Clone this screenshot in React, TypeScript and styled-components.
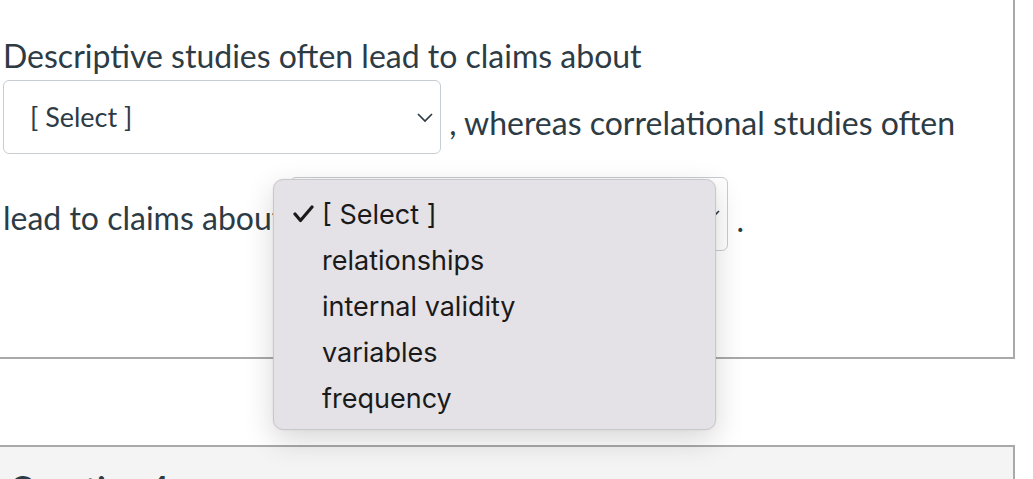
import React from "react";
import styled, { createGlobalStyle } from "styled-components";

const GlobalStyle = createGlobalStyle`
  body {
    margin: 0;
    background: #ffffff;
    font-family: Lato, "Liberation Sans", sans-serif;
    color: #2d3b45;
  }
`;

const Page = styled.div`
  position: relative;
  width: 1033px;
  height: 479px;
  overflow: hidden;
`;

const QuestionPanel = styled.section<{ $muted?: boolean }>`
  box-sizing: border-box;
  width: 1015px;
  border: 2px solid #a9a9a9;
  border-left: none;
  border-top: ${({ $muted }) => ($muted ? "2px solid #a9a9a9" : "none")};
  background: ${({ $muted }) => ($muted ? "#f4f4f4" : "#ffffff")};
  height: ${({ $muted }) => ($muted ? "120px" : "359px")};
  margin-top: ${({ $muted }) => ($muted ? "86px" : "0")};
  padding: ${({ $muted }) => ($muted ? "22px 0 0 10px" : "37px 0 0 3px")};
`;

const Line = styled.div<{ $gap?: number }>`
  display: flex;
  align-items: flex-start;
  font-size: 32px;
  line-height: 38px;
  margin-top: ${({ $gap }) => $gap ?? 0}px;
`;

const Words = styled.span<{ $offset?: number }>`
  margin-top: ${({ $offset }) => $offset ?? 0}px;
  white-space: nowrap;
`;

const SelectBox = styled.div<{ $left?: number }>`
  box-sizing: border-box;
  display: flex;
  align-items: center;
  justify-content: space-between;
  flex: none;
  width: 438px;
  height: 74px;
  margin-left: ${({ $left }) => $left ?? 0}px;
  padding: 0 6px 0 26px;
  border: 1.5px solid #c7cdd1;
  border-radius: 6px;
  background: #ffffff;
  font-size: 27px;
  line-height: 34px;
  color: #2d3b45;
`;

const Chevron = () => (
  <svg width="18" height="11" viewBox="0 0 18 11">
    <polyline points="2,2 9,9 16,2" fill="none" stroke="#2d3b45" strokeWidth="1.7" />
  </svg>
);

const Heading = styled.h2`
  margin: 0;
  font-size: 32px;
  font-weight: 700;
  line-height: 38px;
  color: #2d3b45;
`;

const Menu = styled.ul`
  position: absolute;
  left: 273px;
  top: 179px;
  box-sizing: border-box;
  width: 443px;
  height: 251px;
  margin: 0;
  padding: 12px 0 0 0;
  list-style: none;
  background: #e4e2e6;
  border: 1px solid #c9c7cb;
  border-radius: 10px;
  box-shadow: 0 10px 30px rgba(0, 0, 0, 0.16), 0 0 2px rgba(0, 0, 0, 0.08);
  font-family: Inter, "Liberation Sans", sans-serif;
  font-size: 27px;
  color: #1a1a1a;
`;

const Option = styled.li`
  display: flex;
  align-items: center;
  height: 46px;
  line-height: 46px;
  padding-left: 48px;
  position: relative;
`;

const Check = styled.svg`
  position: absolute;
  left: 19px;
  top: 13px;
`;

const options = ["[ Select ]", "relationships", "internal validity", "variables", "frequency"];

export default function App() {
  return (
    <Page>
      <GlobalStyle />
      <QuestionPanel>
        <Line>
          <Words>Descriptive studies often lead to claims about</Words>
        </Line>
        <Line $gap={5}>
          <SelectBox>
            <span>[ Select ]</span>
            <Chevron />
          </SelectBox>
          <Words $offset={24}>&nbsp;, whereas correlational studies often</Words>
        </Line>
        <Line $gap={23}>
          <Words $offset={22}>lead to claims about</Words>
          <SelectBox $left={7}>
            <span>[ Select ]</span>
            <Chevron />
          </SelectBox>
          <Words $offset={24}>&nbsp;.</Words>
        </Line>
      </QuestionPanel>
      <QuestionPanel $muted>
        <Heading>Question 4</Heading>
      </QuestionPanel>
      <Menu>
        {options.map((label, i) => (
          <Option key={label}>
            {i === 0 && (
              <Check width="21" height="18" viewBox="0 0 21 18">
                <polyline points="2,9 7.5,15.5 19,2" fill="none" stroke="#1a1a1a" strokeWidth="3.2" strokeLinecap="round" strokeLinejoin="round" />
              </Check>
            )}
            {label}
          </Option>
        ))}
      </Menu>
    </Page>
  );
}
